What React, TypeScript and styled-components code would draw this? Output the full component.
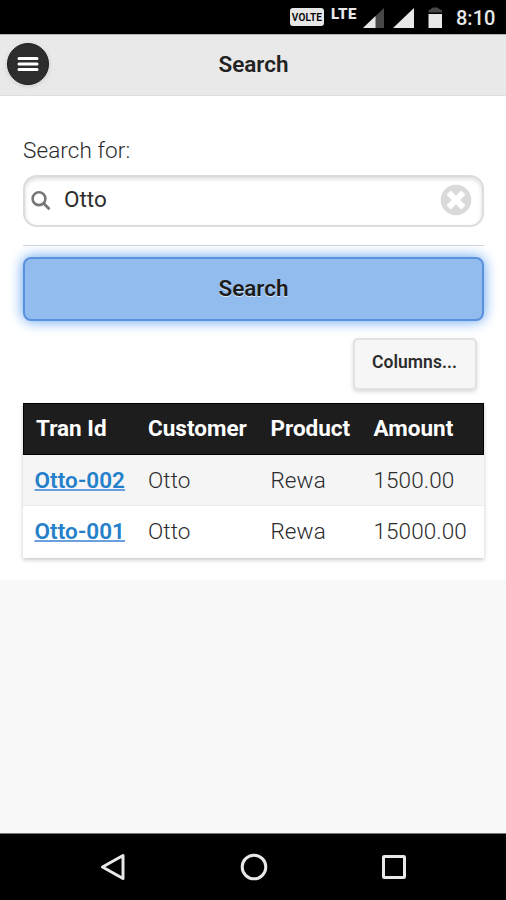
import React from "react";
import styled, { createGlobalStyle } from "styled-components";

const GlobalStyle = createGlobalStyle`
  * { box-sizing: border-box; }
  body { margin: 0; background: #f8f8f8; font-family: Roboto, "Liberation Sans", sans-serif; }
  button, input { font-family: inherit; }
`;

const Screen = styled.div`
  width: 506px;
  height: 900px;
  display: flex;
  flex-direction: column;
  overflow: hidden;
  color: #2b2b2b;
  font-size: 22.5px;
  font-weight: 340;
`;

const StatusBar = styled.div`
  height: 34px;
  flex: none;
  background: #000;
  display: flex;
  justify-content: flex-end;
  padding-right: 11px;
  color: #e8e8e8;
`;

const VolteBadge = styled.span`
  width: 34px;
  height: 18px;
  margin: 8px 7px 0 0;
  border-radius: 3px;
  background: #e6e6e6;
  color: #000;
  font: 600 10px/19px Roboto, sans-serif;
  letter-spacing: 0.2px;
  text-align: center;
`;

const LteLabel = styled.span`
  width: 27px;
  margin: 6px 5px 0 0;
  font: 900 15px/17px Roboto, sans-serif;
  letter-spacing: 0.4px;
`;

const StatusIcons = styled.svg`
  flex: none;
  width: 80px;
  height: 34px;
`;

const Clock = styled.span`
  width: 39px;
  margin-left: 13px;
  font-size: 20px;
  line-height: 37px;
  font-weight: 500;
  white-space: nowrap;
`;

const Header = styled.header`
  height: 62px;
  flex: none;
  display: grid;
  grid-template-columns: 50px 1fr 49px;
  align-items: center;
  background: #e9e9e9;
  border-top: 1px solid #b4b4b4;
  border-bottom: 1px solid #dedede;
`;

const Title = styled.h1`
  margin: 0 0 2px;
  color: #222;
  font-size: 22.5px;
  line-height: 30px;
  font-weight: 600;
  text-align: center;
  text-shadow: 0 1px 0 #eee;
`;

const MenuButton = styled.button`
  width: 42px;
  height: 42px;
  margin: 0 0 2px 7.4px;
  padding: 0;
  border: 1px solid #1f1f1f;
  border-radius: 50%;
  background: #2d2d2d;
  box-shadow: 0 1px 4px rgba(0, 0, 0, 0.15);
  display: grid;
  place-items: center;
`;

const Content = styled.main`
  height: 484px;
  flex: none;
  background: #fff;
  padding: 38px 22px 0 23px;
  display: flex;
  flex-direction: column;
`;

const Label = styled.label`
  height: 32px;
  line-height: 32px;
  letter-spacing: 0.1px;
`;

const SearchField = styled.div`
  height: 52px;
  margin: 9px 0 0;
  border: 2px solid #dcdcdc;
  border-radius: 14px;
  box-shadow: inset 0 2px 4px rgba(0, 0, 0, 0.14);
  display: flex;
  align-items: flex-start;
`;

const FieldIcon = styled.svg`
  width: 22px;
  height: 22px;
  margin: 13px 0 0 5px;
  flex: none;
`;

const FieldInput = styled.input`
  flex: 1;
  min-width: 0;
  height: 44px;
  padding: 0 0 0 12px;
  border: 0;
  outline: 0;
  background: transparent;
  color: #2d2d2d;
  font-size: 22.5px;
  font-weight: 370;
`;

const ClearButton = styled.button`
  width: 32px;
  height: 32px;
  margin: 7px 10px 0 0;
  padding: 0;
  border: 0;
  background: none;
  display: block;
`;

const Divider = styled.div`
  height: 1px;
  margin: 18px 0 11px;
  background: #d6d6d6;
`;

const SubmitButton = styled.button`
  height: 64px;
  flex: none;
  padding: 0 0 2px;
  border: 2px solid #5a91dd;
  border-radius: 8px;
  background: #91bced;
  box-shadow: 0 0 14px #5b9df0;
  color: #1c1c1c;
  font-size: 22.5px;
  font-weight: 600;
  text-shadow: 0 1px 0 #d8e7f8;
`;

const ColumnsButton = styled.button`
  align-self: flex-end;
  width: 124px;
  height: 52px;
  margin: 17px 7.5px 0 0;
  padding: 0 0 4px;
  border: 2px solid #e2e2e2;
  border-radius: 5px;
  background: #f6f6f6;
  box-shadow: 0 2px 4px rgba(0, 0, 0, 0.15);
  color: #2c2c2c;
  font-size: 17.5px;
  font-weight: 600;
  letter-spacing: 0.05px;
  white-space: nowrap;
`;

const Table = styled.div`
  margin-top: 13px;
  box-shadow: 0 2px 4px rgba(0, 0, 0, 0.22);
  display: flex;
  flex-direction: column;
`;

const Row = styled.div<{ $kind: "head" | "odd" | "even" }>`
  height: 52px;
  padding-left: ${(p) => (p.$kind === "head" ? 12 : 11.5)}px;
  display: grid;
  grid-template-columns: ${(p) => (p.$kind === "head" ? 112 : 113.5)}px 122.5px 103px 1fr;
  line-height: 50px;
  background: ${(p) => (p.$kind === "head" ? "#1d1d1d" : p.$kind === "odd" ? "#f5f5f5" : "#fff")};
  color: ${(p) => (p.$kind === "head" ? "#fff" : "#2b2b2b")};
  font-weight: ${(p) => (p.$kind === "head" ? 700 : 340)};
  letter-spacing: ${(p) => (p.$kind === "head" ? 0 : 0.08)}px;
  ${(p) => p.$kind === "head" && "border: 1px solid #000; line-height: 49px;"}
  ${(p) => p.$kind === "odd" && "height: 51px; line-height: 51px; border-bottom: 1px solid #ececec;"}
`;

const Cell = styled.span`
  white-space: nowrap;
`;

const RecordLink = styled.a`
  color: #2580ca;
  font-weight: 600;
  text-decoration: underline;
  text-decoration-color: #689fdc;
  text-decoration-thickness: 2px;
  text-underline-offset: 1px;
  text-decoration-skip-ink: none;
`;

const NavBar = styled.nav`
  height: 67px;
  margin-top: auto;
  background: #000;
  border-top: 1px solid #777;
  display: flex;
  justify-content: center;
  gap: 112.5px;
  padding-left: 1px;
`;

const NavIcon = styled.svg`
  width: 28px;
  height: 28px;
  margin-top: 18.5px;
  fill: none;
  stroke: #e8e8e8;
  stroke-width: 3;
`;

const records = [
  { id: "Otto-002", customer: "Otto", product: "Rewa", amount: "1500.00" },
  { id: "Otto-001", customer: "Otto", product: "Rewa", amount: "15000.00" },
];

export default function App() {
  return (
    <>
      <GlobalStyle />
      <Screen>
        <StatusBar>
          <VolteBadge>VOLTE</VolteBadge>
          <LteLabel>LTE</LteLabel>
          <StatusIcons viewBox="363 0 80 34">
            <path d="M384 8V28H363z" fill="#484848" />
            <path d="M375.5 16V28H363z" fill="#e8e8e8" />
            <path d="M414 8V28H393z" fill="#e8e8e8" />
            <path d="M428.5 12.5V10.5L433 7.5h4l5 3v2z" fill="#484848" />
            <path d="M428.5 14h13.5v14h-13.5z" fill="#e8e8e8" />
          </StatusIcons>
          <Clock>8:10</Clock>
        </StatusBar>
        <Header>
          <MenuButton aria-label="Menu">
            <svg width="24" height="18" viewBox="0 0 24 18">
              <path
                d="M3 3.5h18M3 9h18M3 14.5h18"
                stroke="#fff"
                strokeWidth="3"
                strokeLinecap="round"
              />
            </svg>
          </MenuButton>
          <Title>Search</Title>
        </Header>
        <Content>
          <Label htmlFor="query">Search for:</Label>
          <SearchField>
            <FieldIcon viewBox="0 0 22 22" fill="none" stroke="#777">
              <circle cx="9" cy="8.7" r="6.4" strokeWidth="2.6" />
              <path d="M13.5 13.2L19.5 19.2" strokeWidth="2.8" />
            </FieldIcon>
            <FieldInput id="query" defaultValue="Otto" />
            <ClearButton aria-label="Clear">
              <svg width="32" height="32" viewBox="0 0 32 32">
                <circle cx="16" cy="16" r="15.3" fill="#d9d9d9" />
                <path d="M8.7 8.7L23.3 23.3M23.3 8.7L8.7 23.3" stroke="#fff" strokeWidth="6" />
              </svg>
            </ClearButton>
          </SearchField>
          <Divider />
          <SubmitButton>Search</SubmitButton>
          <ColumnsButton>Columns...</ColumnsButton>
          <Table>
            <Row $kind="head">
              <Cell>Tran Id</Cell>
              <Cell>Customer</Cell>
              <Cell>Product</Cell>
              <Cell>Amount</Cell>
            </Row>
            {records.map((r, i) => (
              <Row key={r.id} $kind={i % 2 === 0 ? "odd" : "even"}>
                <Cell>
                  <RecordLink>{r.id}</RecordLink>
                </Cell>
                <Cell>{r.customer}</Cell>
                <Cell>{r.product}</Cell>
                <Cell>{r.amount}</Cell>
              </Row>
            ))}
          </Table>
        </Content>
        <NavBar>
          <NavIcon viewBox="0 0 28 28">
            <path d="M24 2.5V25.5L3.5 14z" strokeLinejoin="round" />
          </NavIcon>
          <NavIcon viewBox="0 0 28 28">
            <circle cx="14" cy="14" r="11.8" />
          </NavIcon>
          <NavIcon viewBox="0 0 28 28">
            <rect x="3.5" y="3.5" width="21" height="21" rx="0.8" />
          </NavIcon>
        </NavBar>
      </Screen>
    </>
  );
}
